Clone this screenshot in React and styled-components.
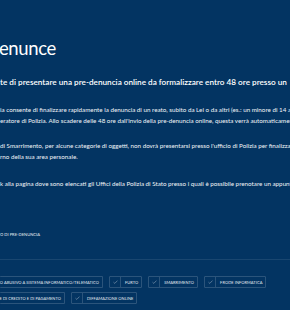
import styled, { createGlobalStyle } from "styled-components";

const Global = createGlobalStyle`
  html, body {
    margin: 0;
    padding: 0;
    background: #033462;
  }
`;

const Page = styled.div`
  width: 290px;
  height: 310px;
  overflow: hidden;
  background: #033462;
  color: #ffffff;
  font-family: Lato, "Open Sans", sans-serif;
  padding-top: 36px;
  box-sizing: border-box;
`;

const Title = styled.h1`
  margin: 0;
  font-size: 18.5px;
  line-height: 24px;
  font-weight: 400;
  letter-spacing: -0.4px;
  white-space: nowrap;
  text-indent: -1px;
`;

const Lead = styled.div`
  margin-top: 17px;
  font-size: 8.2px;
  line-height: 11px;
  font-weight: 600;
  white-space: nowrap;
  overflow: hidden;
`;

const Paragraph = styled.div`
  margin-top: ${(p) => p.$gap || 15}px;
  font-size: 6.25px;
  line-height: 11px;
  color: #f2f5f8;
`;

const Line = styled.div`
  white-space: nowrap;
  overflow: hidden;
`;

const Label = styled.div`
  margin-top: 42px;
  font-size: 4.1px;
  line-height: 8px;
  text-transform: uppercase;
  white-space: nowrap;
  color: #e8edf2;
`;

const Divider = styled.hr`
  margin: 20px 0 0;
  border: 0;
  height: 1px;
  background: rgba(255, 255, 255, 0.09);
`;

const Chips = styled.div`
  margin-top: 16px;
  display: flex;
  flex-direction: column;
  gap: 4px;
`;

const ChipRow = styled.div`
  display: flex;
  gap: 6px;
  white-space: nowrap;
`;

const Chip = styled.div`
  display: flex;
  align-items: center;
  height: 12px;
  box-sizing: border-box;
  border: 1px solid rgba(255, 255, 255, 0.16);
  border-left-width: ${(p) => (p.$cut ? 0 : 1)}px;
  border-radius: 1px;
  flex: none;
  overflow: hidden;
  justify-content: ${(p) => (p.$cut ? "flex-end" : "flex-start")};
`;

const Check = styled.span`
  width: 10px;
  height: 100%;
  display: flex;
  align-items: center;
  justify-content: center;
  border-right: 1px solid rgba(255, 255, 255, 0.16);
  flex: none;
`;

const ChipText = styled.span`
  padding: 0 3px 0 4px;
  font-size: 4px;
  font-weight: 400;
  letter-spacing: 0.05px;
  text-transform: uppercase;
  color: #e4eaf1;
`;

function Tick() {
  return (
    <svg width="5" height="4" viewBox="0 0 5 4">
      <polyline
        points="0.5,2.2 1.8,3.4 4.5,0.6"
        fill="none"
        stroke="#90a4ba"
        strokeWidth="0.6"
      />
    </svg>
  );
}

function Tag({ text, width }) {
  if (width) {
    return (
      <Chip $cut style={{ width }}>
        <ChipText>{text}</ChipText>
      </Chip>
    );
  }
  return (
    <Chip>
      <Check>
        <Tick />
      </Check>
      <ChipText>{text}</ChipText>
    </Chip>
  );
}

export default function App() {
  return (
    <Page>
      <Global />
      <Title>enunce</Title>
      <Lead>
        te di presentare una pre-denuncia online da formalizzare entro 48 ore presso un
      </Lead>
      <Paragraph $gap={16}>
        <Line>
          ia consente di finalizzare rapidamente la denuncia di un reato, subito da Lei o da altri (es.: un minore di 14 a
        </Line>
        <Line>
          eratore di Polizia. Allo scadere delle 48 ore dall'invio della pre-denuncia online, questa verrà automaticamen
        </Line>
      </Paragraph>
      <Paragraph $gap={14}>
        <Line>
          di Smarrimento, per alcune categorie di oggetti, non dovrà presentarsi presso l'ufficio di Polizia per finalizza
        </Line>
        <Line>rno della sua area personale.</Line>
      </Paragraph>
      <Paragraph $gap={16}>
        <Line>
          k alla pagina dove sono elencati gli Uffici della Polizia di Stato presso i quali è possibile prenotare un appunt
        </Line>
      </Paragraph>
      <Label>O di pre-denuncia</Label>
      <Divider />
      <Chips>
        <ChipRow>
          <Tag text="sso abusivo a sistema informatico/telematico" width={103} />
          <Tag text="Furto" />
          <Tag text="Smarrimento" />
          <Tag text="Frode informatica" />
        </ChipRow>
        <ChipRow>
          <Tag text="te di credito e di pagamento" width={65} />
          <Tag text="Diffamazione online" />
        </ChipRow>
      </Chips>
    </Page>
  );
}
